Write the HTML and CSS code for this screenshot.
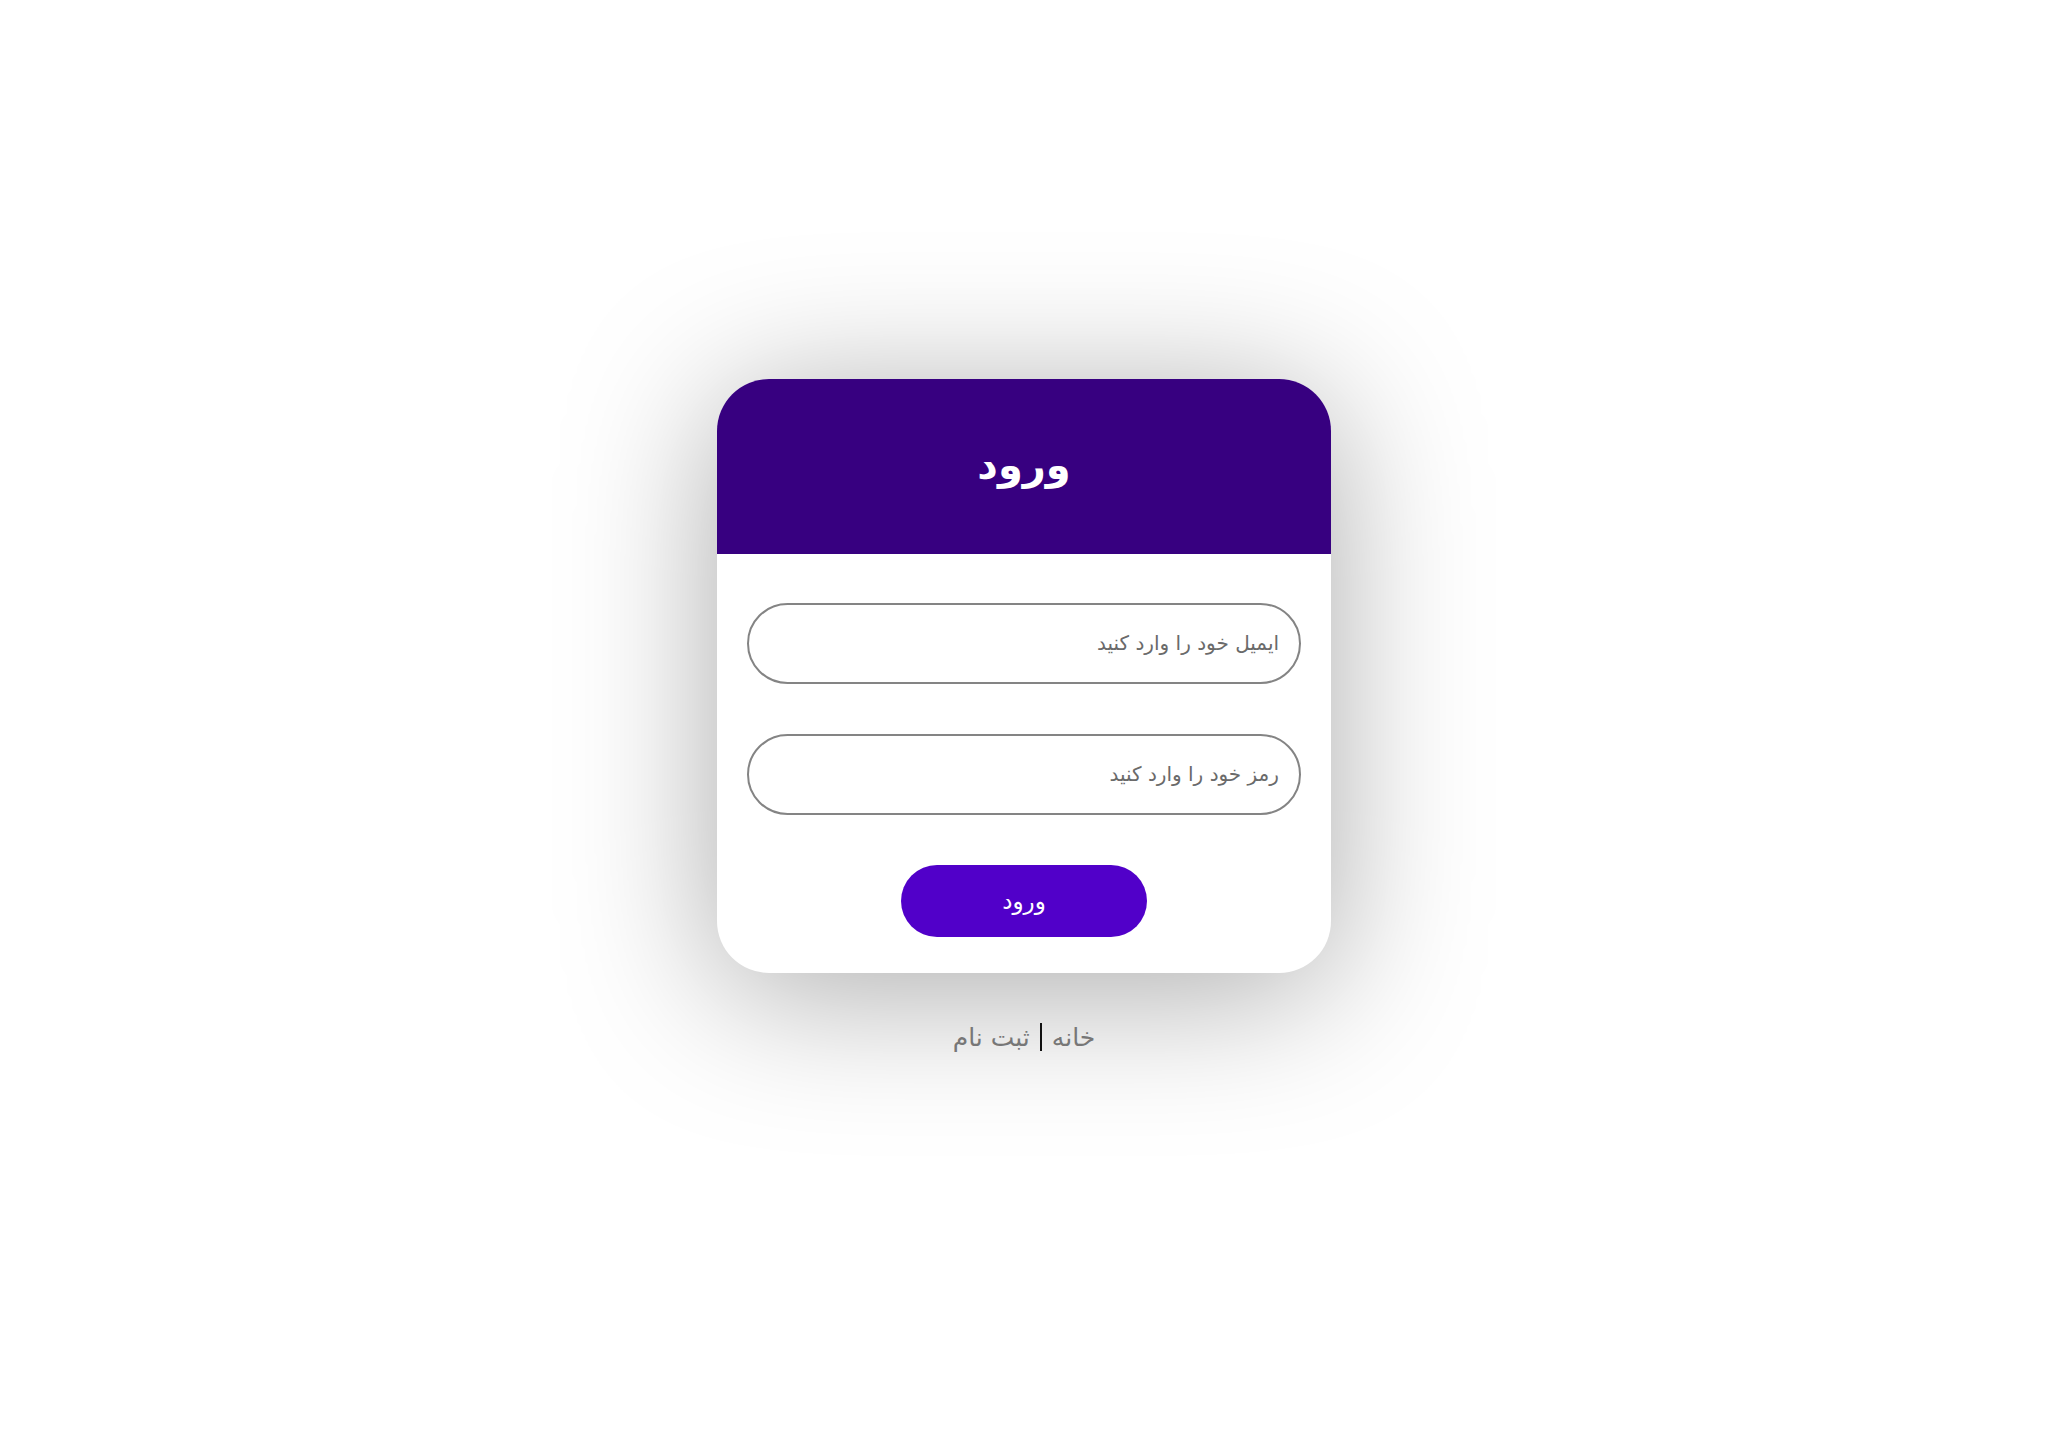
FILE: index.html
```html
<!DOCTYPE html>
<html lang="fa" dir="rtl">
<head>
<meta charset="utf-8">
<title>ورود</title>
<link rel="stylesheet" href="styles.css">
</head>
<body>
<main class="page">
  <section class="card">
    <header class="card-head">
      <h1 class="card-title">ورود</h1>
    </header>
    <form class="card-body">
      <input class="field" type="email" placeholder="ایمیل خود را وارد کنید">
      <input class="field" type="password" placeholder="رمز خود را وارد کنید">
      <button class="submit" type="button">ورود</button>
    </form>
  </section>
  <nav class="links">
    <a class="link" href="#">خانه</a>
    <span class="sep"></span>
    <a class="link" href="#">ثبت نام</a>
  </nav>
</main>
</body>
</html>
```
FILE: styles.css
```css
* { box-sizing: border-box; }
html, body { margin: 0; padding: 0; background: #ffffff; }
body {
  font-family: "DejaVu Sans", "Noto Sans", sans-serif;
  direction: rtl;
}
.page {
  min-height: 100vh;
  display: flex;
  flex-direction: column;
  align-items: center;
  justify-content: center;
  padding-bottom: 10px;
}
.card {
  width: 614px;
  background: #ffffff;
  border-radius: 52px;
  overflow: hidden;
  box-shadow: 0 18px 150px rgba(0, 0, 0, 0.34);
}
.card-head {
  height: 175px;
  background: #370080;
  display: flex;
  align-items: center;
  justify-content: center;
}
.card-title {
  margin: 0;
  color: #ffffff;
  font-size: 40px;
  font-weight: 700;
  line-height: 1;
  padding-bottom: 2px;
}
.card-body {
  margin: 0;
  padding: 49px 30px 36px;
  display: flex;
  flex-direction: column;
  align-items: center;
  gap: 50px;
}
.field {
  width: 554px;
  height: 81px;
  border: 2px solid #848484;
  border-radius: 41px;
  padding: 0 20px;
  font-family: inherit;
  font-size: 20px;
  color: #333;
  background: #fff;
  outline: none;
  direction: rtl;
}
.field::placeholder { color: #6a6a6a; }
.submit {
  width: 246px;
  height: 72px;
  border: none;
  border-radius: 36px;
  background: #5100c9;
  color: #ffffff;
  font-family: inherit;
  font-size: 23px;
  cursor: pointer;
}
.links {
  margin-top: 50px;
  display: flex;
  align-items: center;
  gap: 10px;
  font-size: 25px;
}
.link {
  color: #777777;
  text-decoration: none;
}
.sep {
  width: 2px;
  height: 28px;
  background: #111111;
}
```
